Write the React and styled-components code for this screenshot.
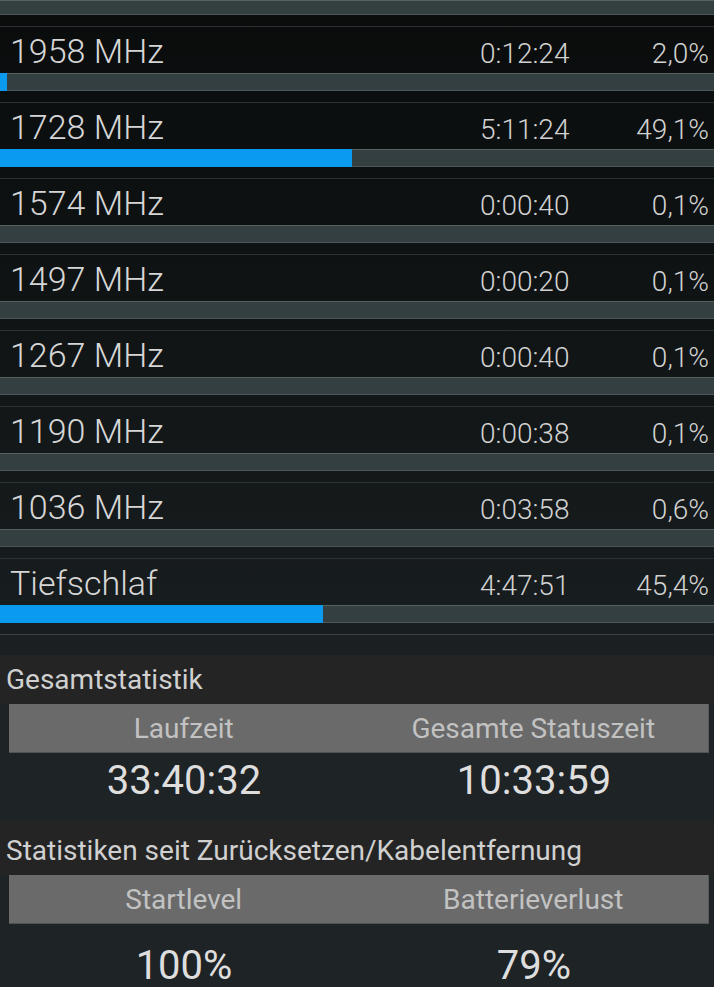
import styled, { createGlobalStyle } from "styled-components";

const GlobalStyle = createGlobalStyle`
  html, body {
    margin: 0;
    padding: 0;
    background: #1e2326;
  }
  body {
    font-family: Roboto, "Noto Sans", sans-serif;
    color: #d4d4d4;
    width: 714px;
    height: 987px;
    overflow: hidden;
  }
`;

const Screen = styled.div`
  width: 714px;
  display: flex;
  flex-direction: column;
`;

const List = styled.div`
  display: flex;
  flex-direction: column;
  background: linear-gradient(to bottom, #0a0c0c 0%, #0f1314 45%, #181d1f 100%);
`;

const Item = styled.div`
  display: flex;
  flex-direction: column;
  border-top: 1px solid #2a3234;
  padding-bottom: 11px;
`;

const Row = styled.div`
  height: 46px;
  box-sizing: border-box;
  padding: 2px 5px 0 10px;
  display: grid;
  grid-template-columns: 1fr 125px 104px;
  align-items: baseline;
  line-height: 44px;
`;

const Name = styled.div`
  font-size: 34px;
  font-weight: 300;
  color: #d6d6d6;
`;

const Time = styled.div`
  font-size: 28px;
  font-weight: 300;
  color: #d2d2d2;
`;

const Percent = styled(Time)`
  text-align: right;
`;

const Track = styled.div`
  height: ${(p) => p.$h || 18}px;
  background: #343f42;
  box-shadow: inset 0 1px #56605f, inset 0 -1px #4c5658;
  display: flex;
`;

const Fill = styled.div`
  height: 100%;
  background: #0a9bf1;
`;

const Stub = styled.div`
  padding-bottom: 11px;
`;

const Spacer = styled.div`
  height: 20px;
  background: #1b1f21;
  border-top: 1px solid #394143;
`;

const Title = styled.div`
  background: #242424;
  height: ${(p) => p.$h}px;
  box-sizing: border-box;
  padding: ${(p) => p.$top}px 0 0 6px;
  font-size: 28px;
  line-height: 48px;
  color: #d0d0d0;
  white-space: nowrap;
`;

const Header = styled.div`
  margin: 0 5px 0 9px;
  height: 49px;
  box-sizing: border-box;
  padding-top: 1px;
  background: #6a6a6a;
  border-bottom: 1px solid #4e5454;
  border-right: 1px solid #555a5a;
  display: grid;
  grid-template-columns: 1fr 1fr;
  font-size: 28px;
  line-height: 47px;
  color: #c2c2c2;
  text-align: center;
`;

const Values = styled.div`
  margin: 0 5px 0 9px;
  padding: ${(p) => p.$top}px 0 ${(p) => p.$bottom}px;
  display: grid;
  grid-template-columns: 1fr 1fr;
  font-size: 40px;
  line-height: 48px;
  color: #dedede;
  text-align: center;
`;

const rows = [
  { name: "1958 MHz", time: "0:12:24", pct: "2,0%", bar: 7 },
  { name: "1728 MHz", time: "5:11:24", pct: "49,1%", bar: 352 },
  { name: "1574 MHz", time: "0:00:40", pct: "0,1%", bar: 0 },
  { name: "1497 MHz", time: "0:00:20", pct: "0,1%", bar: 0 },
  { name: "1267 MHz", time: "0:00:40", pct: "0,1%", bar: 0 },
  { name: "1190 MHz", time: "0:00:38", pct: "0,1%", bar: 0 },
  { name: "1036 MHz", time: "0:03:58", pct: "0,6%", bar: 0 },
  { name: "Tiefschlaf", time: "4:47:51", pct: "45,4%", bar: 323 },
];

export default function App() {
  return (
    <Screen>
      <GlobalStyle />
      <List>
        <Stub>
          <Track $h={15} />
        </Stub>
        {rows.map((r) => (
          <Item key={r.name}>
            <Row>
              <Name>{r.name}</Name>
              <Time>{r.time}</Time>
              <Percent>{r.pct}</Percent>
            </Row>
            <Track>
              <Fill style={{ width: r.bar }} />
            </Track>
          </Item>
        ))}
      </List>
      <Spacer />
      <Title $h={49} $top={1}>Gesamtstatistik</Title>
      <Header>
        <div>Laufzeit</div>
        <div>Gesamte Statuszeit</div>
      </Header>
      <Values $top={4} $bottom={16}>
        <div>33:40:32</div>
        <div>10:33:59</div>
      </Values>
      <Title $h={54} $top={6}>Statistiken seit Zurücksetzen/Kabelentfernung</Title>
      <Header>
        <div>Startlevel</div>
        <div>Batterieverlust</div>
      </Header>
      <Values $top={18} $bottom={16}>
        <div>100%</div>
        <div>79%</div>
      </Values>
    </Screen>
  );
}
